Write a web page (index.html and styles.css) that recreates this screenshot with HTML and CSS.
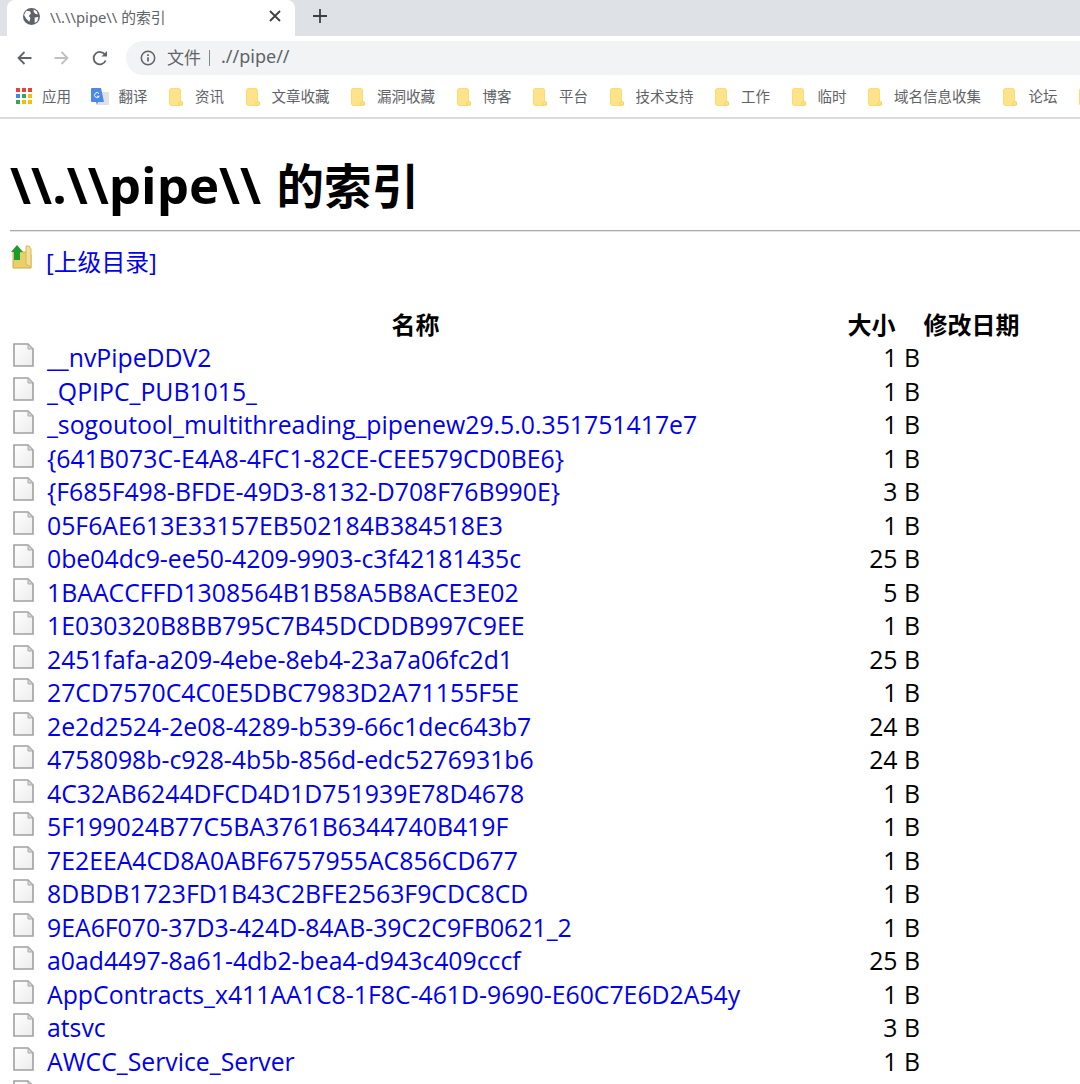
FILE: index.html
```html
<!DOCTYPE html>
<html lang="zh-CN">
<head>
    <meta charset="UTF-8">
    <meta name="viewport" content="width=device-width, initial-scale=1.0">
    <title>\\.\\pipe\\ 的索引</title>
    <link rel="stylesheet" href="styles.css">
</head>
<body>
    <svg class="defs" width="0" height="0">
        <symbol id="folder" viewBox="0 0 14 18">
            <path d="M1.500 0.500h9l1 1.500v14l-1 1.500h-9l-1-1.500v-14z" fill="#fee38a" stroke="#fbdc73"/>
            <path d="M10 17.500v-3l1-1 2.500 0.500v3z" fill="#fee38a" stroke="#f5d25f"/>
        </symbol>
        <symbol id="file" viewBox="0 0 21 24">
            <defs>
                <linearGradient id="page" x1="0" y1="0" x2="1" y2="1">
                    <stop offset="0" stop-color="#ffffff"/>
                    <stop offset="1" stop-color="#ececec"/>
                </linearGradient>
            </defs>
            <path d="M1 1h14l5 5v17h-19z" fill="url(#page)" stroke="#a0a0a0" stroke-width="1.600"/>
            <path d="M15 1v5h5z" fill="#d4d4d4" stroke="#aaaaaa"/>
        </symbol>
    </svg>

    <header class="chrome">
        <div class="tabstrip">
            <div class="tab">
                <svg class="globe" viewBox="0 0 16 16" width="17" height="17">
                    <circle cx="8" cy="8" r="8" fill="#5f6368"/>
                    <path d="M3 2.500l3.500 0.500 1 2-2 2.500 1.500 2-1 3.500-3-3-2-3.500zM10 1.500l3 1.500 1 3-2.500-0.500-1.500-2zM11 9l3.500-0.500-1 4-2.500 1.500z" fill="#fff"/>
                </svg>
                <span class="tab-title">\\.\\pipe\\ 的索引</span>
                <svg class="tab-close" viewBox="0 0 12 12" width="12" height="12">
                    <path d="M1 1l10 10M11 1l-10 10" stroke="#3c4043" stroke-width="1.800" fill="none"/>
                </svg>
            </div>
            <svg class="new-tab" viewBox="0 0 14 14" width="14" height="14">
                <path d="M7 0v14M0 7h14" stroke="#3c4043" stroke-width="1.800" fill="none"/>
            </svg>
        </div>

        <div class="toolbar">
            <svg class="nav-btn" viewBox="0 0 16 16" width="16" height="16">
                <path d="M15.500 8h-13M8.500 2l-6 6 6 6" stroke="#5f6368" stroke-width="1.800" fill="none"/>
            </svg>
            <svg class="nav-btn" viewBox="0 0 16 16" width="16" height="16">
                <path d="M0.500 8h13M7.500 2l6 6-6 6" stroke="#bdc1c6" stroke-width="1.800" fill="none"/>
            </svg>
            <svg class="nav-btn" viewBox="0 0 16 16" width="16" height="16">
                <path d="M13.600 10.500a6.200 6.200 0 1 1-0.400-5.500" stroke="#5f6368" stroke-width="1.800" fill="none"/>
                <path d="M15 1v5.500h-5.500z" fill="#5f6368"/>
            </svg>
            <div class="omnibox">
                <svg class="info" viewBox="0 0 16 16" width="16" height="16">
                    <circle cx="8" cy="8" r="6.700" stroke="#5f6368" stroke-width="1.500" fill="none"/>
                    <path d="M8 7.200v4.300M8 4.300v1.600" stroke="#5f6368" stroke-width="1.700"/>
                </svg>
                <span class="scheme">文件</span>
                <span class="divider"></span>
                <span class="url">.//pipe//</span>
            </div>
        </div>

        <div class="bookmarks">
            <div class="bm bm-apps">
                <span class="apps">
                    <i class="r"></i><i class="r"></i><i class="r"></i>
                    <i class="b"></i><i class="g"></i><i class="y"></i>
                    <i class="g"></i><i class="y"></i><i class="y"></i>
                </span>
                <span>应用</span>
            </div>
            <div class="bm bm-translate">
                <svg viewBox="0 0 18 19" width="18" height="19" class="translate">
                    <rect x="6" y="4" width="12" height="13" rx="1" fill="#dfe1e5"/>
                    <path d="M1 0h9l3 14h-6l-1 3-1-3h-4a1 1 0 0 1-1-1v-12a1 1 0 0 1 1-1z" fill="#4a89e8"/>
                    <path d="M8 5.500a2.500 2.500 0 1 0 0.300 2.800h-2.300" stroke="#fff" stroke-width="1" fill="none"/>
                </svg>
                <span>翻译</span>
            </div>
            <div class="bm"><svg class="fold"><use href="#folder"/></svg><span>资讯</span></div>
            <div class="bm"><svg class="fold"><use href="#folder"/></svg><span>文章收藏</span></div>
            <div class="bm"><svg class="fold"><use href="#folder"/></svg><span>漏洞收藏</span></div>
            <div class="bm"><svg class="fold"><use href="#folder"/></svg><span>博客</span></div>
            <div class="bm"><svg class="fold"><use href="#folder"/></svg><span>平台</span></div>
            <div class="bm"><svg class="fold"><use href="#folder"/></svg><span>技术支持</span></div>
            <div class="bm"><svg class="fold"><use href="#folder"/></svg><span>工作</span></div>
            <div class="bm"><svg class="fold"><use href="#folder"/></svg><span>临时</span></div>
            <div class="bm"><svg class="fold"><use href="#folder"/></svg><span>域名信息收集</span></div>
            <div class="bm"><svg class="fold"><use href="#folder"/></svg><span>论坛</span></div>
            <div class="bm"><svg class="fold"><use href="#folder"/></svg></div>
        </div>
    </header>

    <main class="listing">
        <h1>\\.\\pipe\\ <span class="h1-cjk">的索引</span></h1>
        <hr>
        <div class="parent">
            <svg class="up-icon" viewBox="0 0 22 24" width="22" height="24">
                <path d="M3 7h15l3 3v13h-18z" fill="#e8cf6a" stroke="#c9ad4e"/>
                <path d="M16 1h3l2 3v18l-5-3z" fill="#f3e08f" stroke="#d4ba5c"/>
                <path d="M7 0l6 7h-3v8h-6v-8h-3z" fill="#1f9a2c"/>
            </svg>
            <a href="#">[上级目录]</a>
        </div>

        <table>
            <thead>
                <tr><th class="col-name">名称</th><th class="col-size">大小</th><th class="col-date">修改日期</th></tr>
            </thead>
            <tbody>
                <tr><td><svg class="ficon"><use href="#file"/></svg><a href="#">__nvPipeDDV2</a></td><td class="size">1 B</td><td></td></tr>
                <tr><td><svg class="ficon"><use href="#file"/></svg><a href="#">_QPIPC_PUB1015_</a></td><td class="size">1 B</td><td></td></tr>
                <tr><td><svg class="ficon"><use href="#file"/></svg><a href="#">_sogoutool_multithreading_pipenew29.5.0.351751417e7</a></td><td class="size">1 B</td><td></td></tr>
                <tr><td><svg class="ficon"><use href="#file"/></svg><a href="#">{641B073C-E4A8-4FC1-82CE-CEE579CD0BE6}</a></td><td class="size">1 B</td><td></td></tr>
                <tr><td><svg class="ficon"><use href="#file"/></svg><a href="#">{F685F498-BFDE-49D3-8132-D708F76B990E}</a></td><td class="size">3 B</td><td></td></tr>
                <tr><td><svg class="ficon"><use href="#file"/></svg><a href="#">05F6AE613E33157EB502184B384518E3</a></td><td class="size">1 B</td><td></td></tr>
                <tr><td><svg class="ficon"><use href="#file"/></svg><a href="#">0be04dc9-ee50-4209-9903-c3f42181435c</a></td><td class="size">25 B</td><td></td></tr>
                <tr><td><svg class="ficon"><use href="#file"/></svg><a href="#">1BAACCFFD1308564B1B58A5B8ACE3E02</a></td><td class="size">5 B</td><td></td></tr>
                <tr><td><svg class="ficon"><use href="#file"/></svg><a href="#">1E030320B8BB795C7B45DCDDB997C9EE</a></td><td class="size">1 B</td><td></td></tr>
                <tr><td><svg class="ficon"><use href="#file"/></svg><a href="#">2451fafa-a209-4ebe-8eb4-23a7a06fc2d1</a></td><td class="size">25 B</td><td></td></tr>
                <tr><td><svg class="ficon"><use href="#file"/></svg><a href="#">27CD7570C4C0E5DBC7983D2A71155F5E</a></td><td class="size">1 B</td><td></td></tr>
                <tr><td><svg class="ficon"><use href="#file"/></svg><a href="#">2e2d2524-2e08-4289-b539-66c1dec643b7</a></td><td class="size">24 B</td><td></td></tr>
                <tr><td><svg class="ficon"><use href="#file"/></svg><a href="#">4758098b-c928-4b5b-856d-edc5276931b6</a></td><td class="size">24 B</td><td></td></tr>
                <tr><td><svg class="ficon"><use href="#file"/></svg><a href="#">4C32AB6244DFCD4D1D751939E78D4678</a></td><td class="size">1 B</td><td></td></tr>
                <tr><td><svg class="ficon"><use href="#file"/></svg><a href="#">5F199024B77C5BA3761B6344740B419F</a></td><td class="size">1 B</td><td></td></tr>
                <tr><td><svg class="ficon"><use href="#file"/></svg><a href="#">7E2EEA4CD8A0ABF6757955AC856CD677</a></td><td class="size">1 B</td><td></td></tr>
                <tr><td><svg class="ficon"><use href="#file"/></svg><a href="#">8DBDB1723FD1B43C2BFE2563F9CDC8CD</a></td><td class="size">1 B</td><td></td></tr>
                <tr><td><svg class="ficon"><use href="#file"/></svg><a href="#">9EA6F070-37D3-424D-84AB-39C2C9FB0621_2</a></td><td class="size">1 B</td><td></td></tr>
                <tr><td><svg class="ficon"><use href="#file"/></svg><a href="#">a0ad4497-8a61-4db2-bea4-d943c409cccf</a></td><td class="size">25 B</td><td></td></tr>
                <tr><td><svg class="ficon"><use href="#file"/></svg><a href="#">AppContracts_x411AA1C8-1F8C-461D-9690-E60C7E6D2A54y</a></td><td class="size">1 B</td><td></td></tr>
                <tr><td><svg class="ficon"><use href="#file"/></svg><a href="#">atsvc</a></td><td class="size">3 B</td><td></td></tr>
                <tr><td><svg class="ficon"><use href="#file"/></svg><a href="#">AWCC_Service_Server</a></td><td class="size">1 B</td><td></td></tr>
                <tr><td><svg class="ficon"><use href="#file"/></svg></td><td class="size"></td><td></td></tr>
            </tbody>
        </table>
    </main>
</body>
</html>
```

FILE: styles.css
```css
html, body {
    height: 1084px;
    overflow: hidden;
}
body {
    margin: 0;
    background: white;
    font-family: "Open Sans", "Noto Sans CJK SC", sans-serif;
    color: black;
}
.defs {
    display: block;
    height: 0;
}

/* browser chrome */
.chrome {
    height: 119px;
    box-sizing: border-box;
    border-bottom: 2px solid #dadce0;
    font-family: "Noto Sans", "Noto Sans CJK SC", sans-serif;
}
.tabstrip {
    height: 36px;
    background: #dee1e6;
    display: flex;
    align-items: center;
}
.tab {
    width: 288px;
    height: 36px;
    margin-left: 7px;
    padding: 0 14px 0 16px;
    box-sizing: border-box;
    background: white;
    border-radius: 8px 8px 0 0;
    display: flex;
    align-items: center;
}
.globe {
    margin-top: -4px;
}
.tab-title {
    margin-left: 10px;
    margin-top: -3px;
    font-size: 14.800px;
    color: #5f6368;
    flex: 1;
}
.tab-close {
    margin-top: -4px;
}
.new-tab {
    margin-left: 18px;
    margin-top: -4px;
}
.toolbar {
    height: 43px;
    display: flex;
    align-items: center;
    padding-left: 16px;
}
.nav-btn {
    margin-right: 22px;
}
.nav-btn:nth-child(3) {
    margin-right: 18px;
}
.omnibox {
    flex: 1;
    height: 34px;
    padding-left: 14px;
    border-radius: 17px 0 0 17px;
    background: #f1f3f4;
    display: flex;
    align-items: center;
    font-size: 17px;
    color: #5f6368;
}
.scheme {
    margin-left: 11px;
    margin-top: -3px;
}
.divider {
    width: 1px;
    height: 16px;
    margin: 0 11px 0 8px;
    background: #80868b;
}
.url {
    margin-top: -3px;
    font-size: 18px;
    color: #5f6368;
}
.bookmarks {
    height: 36px;
    padding-left: 16px;
    display: flex;
    align-items: center;
    font-size: 14.500px;
    color: #5f6368;
    overflow: hidden;
}
.bm {
    display: flex;
    align-items: center;
    flex: none;
    margin-right: 21.500px;
}
.bm-apps {
    margin-right: 19.500px;
}
.bm span {
    margin-top: -3px;
}
.fold {
    width: 14px;
    height: 18px;
    margin-right: 12px;
}
.apps {
    width: 16px;
    display: grid;
    grid-template-columns: repeat(3, 4px);
    gap: 2px;
    margin-right: 10px;
}
.apps i {
    height: 4px;
}
.apps .r { background: #ea4335; }
.apps .b { background: #4285f4; }
.apps .g { background: #34a853; }
.apps .y { background: #fbbc05; }
.translate {
    margin-right: 10px;
}

/* directory listing */
.listing {
    padding-left: 10px;
}
h1 {
    margin: 0;
    padding-top: 31px;
    height: 80px;
    font-size: 51px;
    line-height: 68px;
    font-weight: bold;
    word-spacing: 2px;
}
.h1-cjk {
    font-size: 47.500px;
}
hr {
    margin: 0;
    border: none;
    border-top: 1px solid #a9a9a9;
    border-bottom: 1px solid #e4e4e4;
}
a {
    color: #0000ee;
    text-decoration: none;
}
.parent {
    height: 62px;
    display: flex;
    align-items: flex-start;
    font-size: 23.800px;
    line-height: 34px;
    padding-top: 13px;
}
.up-icon {
    margin-right: 14px;
}
table {
    width: 1010px;
    border-collapse: collapse;
    table-layout: fixed;
    font-size: 24.800px;
    line-height: 33px;
}
th {
    height: 32.500px;
    padding: 1px 0 0;
    font-size: 24px;
    font-weight: bold;
}
td {
    height: 33.500px;
    padding: 0;
    white-space: nowrap;
}
.col-name {
    width: 811px;
}
th.col-size {
    width: 97px;
    padding-left: 2px;
}
th.col-date {
    width: 97px;
    padding-left: 3px;
}
.size {
    text-align: right;
}
.ficon {
    width: 21px;
    height: 24px;
    margin: 2px 13px 0 3px;
    vertical-align: top;
}
```
